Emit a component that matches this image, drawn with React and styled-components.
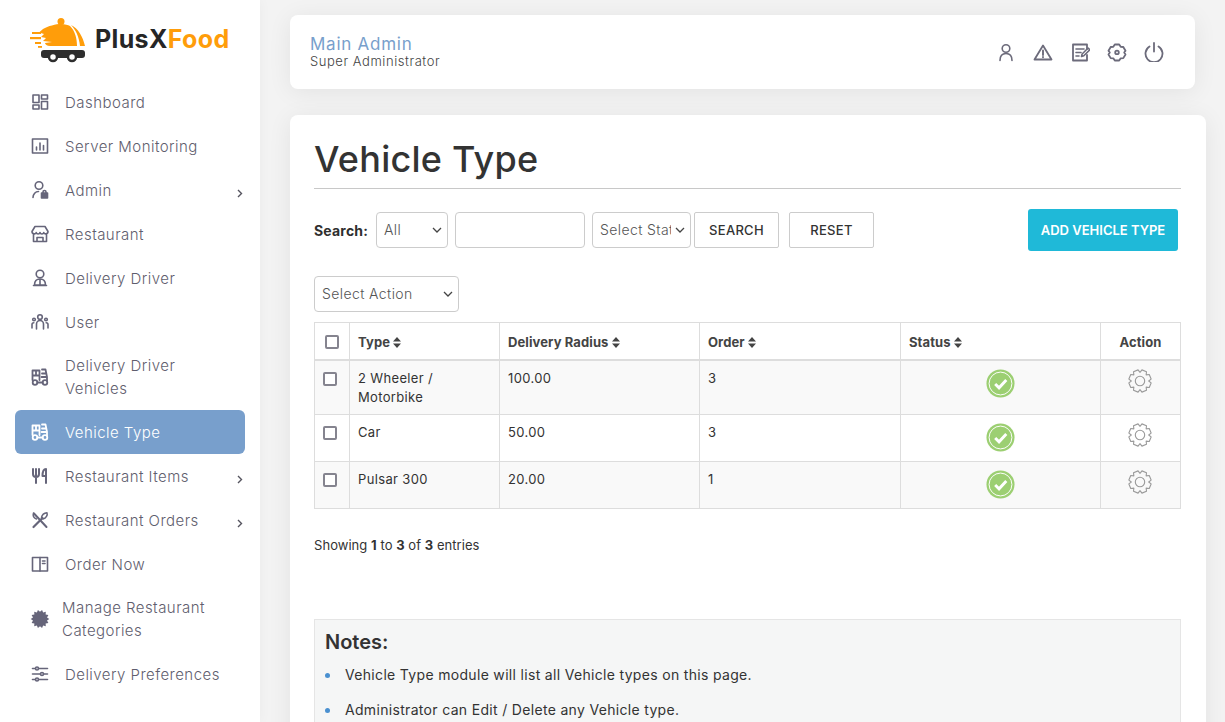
import React from 'react';
import styled, { createGlobalStyle } from 'styled-components';

const GlobalStyle = createGlobalStyle`
  html, body {
    margin: 0;
    height: 722px;
    overflow: hidden;
    background: #f3f3f3;
    font-family: Inter, "Noto Sans", "Liberation Sans", sans-serif;
  }
  * { box-sizing: border-box; }
`;

const Page = styled.div`
  display: flex;
  width: 1225px;
  height: 722px;
  overflow: hidden;
`;

const Sidebar = styled.aside`
  width: 260px;
  flex-shrink: 0;
  background: #fff;
  box-shadow: 0 0 12px rgba(0, 0, 0, 0.04);
`;

const LogoRow = styled.div`
  height: 80px;
  display: flex;
  align-items: flex-start;
  padding: 17px 0 0 30px;
`;

const LogoText = styled.div`
  margin: 7px 0 0 9px;
  font-size: 25px;
  line-height: 31px;
  font-weight: 700;
  letter-spacing: 0.35px;
  color: #262626;
  span { color: #ff9d0a; }
`;

const Nav = styled.nav`
  padding: 0 15px;
`;

const NavItem = styled.div`
  display: flex;
  align-items: center;
  min-height: 44px;
  padding: 10px 2px 10px 15px;
  border-radius: 6px;
  font-size: 15px;
  line-height: 23px;
  font-weight: 300;
  letter-spacing: 0.46px;
  color: ${p => (p.$active ? '#fff' : '#5f5e6e')};
  background: ${p => (p.$active ? '#789fcc' : 'transparent')};
`;

const NavIcon = styled.span`
  display: flex;
  width: 20px;
  height: 20px;
  flex-shrink: 0;
  margin-right: ${p => (p.$tight ? '12px' : '15px')};
  color: ${p => (p.$active ? '#fff' : '#66657a')};
`;

const NavLabel = styled.span`
  max-width: 158px;
`;

const Caret = styled.svg`
  margin: 6px 0 0 auto;
  flex-shrink: 0;
`;

const Main = styled.main`
  flex: 1;
  padding: 15px 20px 0 30px;
`;

const TopBar = styled.header`
  display: flex;
  align-items: center;
  justify-content: space-between;
  width: 905px;
  height: 74px;
  padding: 0 31px 0 20px;
  background: #fff;
  border-radius: 8px;
  box-shadow: 0 3px 24px rgba(0, 0, 0, 0.07);
`;

const AdminBlock = styled.div`
  padding-bottom: 1px;
`;

const AdminName = styled.div`
  font-size: 17px;
  line-height: 20px;
  letter-spacing: 0.75px;
  color: #789fcc;
`;

const AdminRole = styled.div`
  font-size: 13px;
  line-height: 15px;
  font-weight: 300;
  letter-spacing: 0.55px;
  color: #444;
`;

const TopIcons = styled.div`
  display: flex;
  gap: 17px;
  color: #6c6b7b;
`;

const Card = styled.section`
  margin-top: 26px;
  height: 640px;
  padding: 20px 25px 0 24px;
  background: #fff;
  border-radius: 8px;
  box-shadow: 0 3px 24px rgba(0, 0, 0, 0.07);
`;

const Title = styled.h1`
  margin: 0;
  height: 54px;
  border-bottom: 1px solid #c8c8c8;
  font-size: 36px;
  line-height: 48px;
  font-weight: 500;
  letter-spacing: 0.25px;
  color: #333;
`;

const Toolbar = styled.div`
  display: flex;
  align-items: center;
  height: 42px;
  margin-top: 20px;
  padding-right: 3px;
`;

const SearchLabel = styled.label`
  width: 62px;
  font-size: 14px;
  font-weight: 700;
  letter-spacing: 0.2px;
  color: #2f2f2f;
`;

const Select = styled.select`
  appearance: none;
  width: ${p => p.$w}px;
  height: 36px;
  margin-right: ${p => p.$mr || 0}px;
  padding: 0 19px 2px 7px;
  background: #fff url("data:image/svg+xml,%3Csvg xmlns='http://www.w3.org/2000/svg' width='10' height='6' fill='none' stroke='%23444' stroke-width='1.3'%3E%3Cpath d='M1 1l4 4 4-4'/%3E%3C/svg%3E") no-repeat right 5px center;
  border: 1px solid #ccc;
  border-radius: 4px;
  font: 300 14px Inter, sans-serif;
  letter-spacing: 0.4px;
  color: #555;
`;

const SearchInput = styled.input`
  width: 130px;
  height: 36px;
  margin-right: 7px;
  border: 1px solid #ccc;
  border-radius: 4px;
`;

const OutlineButton = styled.button`
  width: 85px;
  height: 36px;
  margin-left: ${p => p.$ml || 0}px;
  background: #fff;
  border: 1px solid #ccc;
  border-radius: 2px;
  font: 500 13px Inter, sans-serif;
  letter-spacing: 0.3px;
  color: #333;
`;

const AddButton = styled.button`
  width: 150px;
  height: 42px;
  margin-left: auto;
  background: #1fb9d8;
  border: none;
  border-radius: 3px;
  font: 600 13px Inter, sans-serif;
  color: #fff;
`;

const ActionRow = styled.div`
  margin-top: 25px;
  height: 46px;
`;

const Table = styled.table`
  width: 866px;
  table-layout: fixed;
  border-collapse: collapse;
  font-size: 13px;
  color: #333;
`;

const Th = styled.th`
  height: 37px;
  padding: 2px 8px 0;
  border: 1px solid #ddd;
  border-bottom: 2px solid #ddd;
  text-align: ${p => (p.$center ? 'center' : 'left')};
  font-weight: 700;
  letter-spacing: 0.1px;
  color: #444;
`;

const Row = styled.tr`
  background: ${p => (p.$odd ? '#f9f9f9' : '#fff')};
`;

const Td = styled.td`
  height: ${p => p.$h}px;
  padding: 8px 8px 7px;
  vertical-align: top;
  border: 1px solid #ddd;
  font-weight: 400;
  line-height: 19px;
  letter-spacing: 0.35px;
  text-align: ${p => (p.$center ? 'center' : 'left')};
`;

const Check = styled.input.attrs({ type: 'checkbox' })`
  appearance: none;
  display: block;
  width: 14px;
  height: 14px;
  margin: ${p => p.$m};
  background: #fff;
  border: 2px solid #85848f;
  border-radius: 2px;
`;

const SortIcon = styled.svg`
  margin-left: 3px;
  vertical-align: -1px;
`;

const StatusSvg = styled.svg`
  display: block;
  margin: 0 auto;
`;

const GearSvg = styled.svg`
  display: block;
  margin: 0 auto;
  transform: translateX(-1px);
`;

const Info = styled.div`
  margin-top: 27px;
  font-size: 13px;
  line-height: 18px;
  font-weight: 400;
  letter-spacing: 0.05px;
  color: #333;
`;

const Notes = styled.div`
  margin-top: 65px;
  height: 120px;
  padding: 8px 10px;
  background: #f5f6f6;
  border: 1px solid #e5e5e5;
`;

const NotesTitle = styled.h4`
  margin: 0;
  font-size: 20px;
  line-height: 28px;
  font-weight: 600;
  color: #333;
`;

const NotesList = styled.ul`
  margin: 7px 0 0;
  padding: 0 0 0 20px;
  list-style: none;
`;

const NotesItem = styled.li`
  position: relative;
  height: 35px;
  font-size: 14px;
  line-height: 24px;
  letter-spacing: 0.32px;
  color: #333;
  &::before {
    content: '';
    position: absolute;
    left: -20px;
    top: 10px;
    width: 5px;
    height: 5px;
    border-radius: 50%;
    background: #4a90d0;
  }
`;

const Icon = ({ children, size = 20 }) => (
  <svg width={size} height={size} viewBox="0 0 20 20" fill="none" stroke="currentColor" strokeWidth="1.6" strokeLinecap="round" strokeLinejoin="round">
    {children}
  </svg>
);

const DashboardIcon = () => (
  <Icon>
    <rect x="3" y="3" width="6" height="7.5" />
    <rect x="11.5" y="3" width="6" height="4" />
    <rect x="3" y="13" width="6" height="4" />
    <rect x="11.5" y="9.5" width="6" height="7.5" />
  </Icon>
);

const ServerIcon = () => (
  <Icon>
    <rect x="2.5" y="3" width="15" height="14" />
    <path d="M6.5 14v-3M10 14V7M13.5 14V9.5" />
  </Icon>
);

const AdminIcon = () => (
  <Icon>
    <circle cx="9" cy="5.5" r="3.8" />
    <path d="M3 17.5c0-3.5 2.5-6 5.5-6" />
    <rect x="11.5" y="13" width="6" height="5" fill="currentColor" />
    <path d="M13 13v-1a1.5 1.5 0 0 1 3 0v1" />
  </Icon>
);

const RestaurantIcon = () => (
  <Icon>
    <path d="M5 2.5h10l3 5c0 3-4 3-4.200 1-.5 2-3.300 2-3.800 0-.5 2-3.300 2-3.800 0C6 10.500 2 10.500 2 7.500z" />
    <path d="M3.500 10.500V17.500h13V10.500M7 17.500v-4h6v4" />
  </Icon>
);

const DriverIcon = () => (
  <Icon>
    <circle cx="10" cy="6" r="3.800" />
    <path d="M4.500 17c0-4 2.500-6 5.500-6s5.500 2 5.500 6zM3.500 17.500h13M10 11v6" />
  </Icon>
);

const UserIcon = () => (
  <Icon>
    <circle cx="10" cy="5" r="2.300" />
    <circle cx="4" cy="7.500" r="1.300" />
    <circle cx="16" cy="7.500" r="1.300" />
    <path d="M6.500 17v-5a3.500 3.500 0 0 1 7 0v5M2 16v-3.500c0-1 .8-1.800 1.800-1.800M18 16v-3.500c0-1-.8-1.800-1.800-1.800" />
  </Icon>
);

const VehicleIcon = () => (
  <Icon>
    <path d="M2.500 13V3.500h7V13M2.500 8.500h7M6 3.500v5" strokeWidth="1.800" />
    <path d="M12 2.500h3.500l1.500 7.500v3.500M12 6.500h3.500M11.500 10H17" strokeWidth="1.800" />
    <circle cx="5" cy="15.500" r="2.300" strokeWidth="1.800" />
    <circle cx="15" cy="15.500" r="2.300" strokeWidth="1.800" />
    <path d="M7.500 15.500h5" strokeWidth="1.800" />
  </Icon>
);

const ForkIcon = () => (
  <Icon>
    <path d="M3 3v5c0 2 1 3 3 3s3-1 3-3V3M6 3v14" strokeWidth="2" />
    <path d="M16 17V3c-2.500 0-3.500 3-3.500 7h3.500" strokeWidth="2" />
  </Icon>
);

const CrossedIcon = () => (
  <Icon>
    <path d="M3.500 17 12.500 8" strokeWidth="2.200" />
    <path d="M17 2.800c.8 2.200-.8 5.500-4 6.200L11.500 7.500C12 5 14.500 3 17 2.800z" strokeWidth="1.500" />
    <path d="M4 3.500 16.500 17" strokeWidth="2" />
    <path d="M3.500 3c-.8 2.500.5 5 3 6" strokeWidth="1.500" />
  </Icon>
);

const BookIcon = () => (
  <Icon>
    <rect x="2.500" y="3.500" width="15" height="13.500" />
    <path d="M10 3.500V17M12.500 7h2.500M12.500 9.500h2.500" />
  </Icon>
);

const badgePoints = () => {
  const pts = [];
  for (let i = 0; i < 28; i++) {
    const r = i % 2 ? 7.200 : 9.300;
    const a = (i * Math.PI) / 14;
    pts.push(`${(10 + r * Math.cos(a)).toFixed(2)},${(10 + r * Math.sin(a)).toFixed(2)}`);
  }
  return pts.join(' ');
};

const BadgeIcon = () => (
  <Icon>
    <polygon points={badgePoints()} fill="currentColor" stroke="none" />
  </Icon>
);

const SlidersIcon = () => (
  <Icon>
    <path d="M2.500 4.500h3M8.500 4.500h9M2.500 10h8M13.500 10h4M2.500 15.500h3M8.500 15.500h9" />
    <circle cx="7" cy="4.500" r="1.500" />
    <circle cx="12" cy="10" r="1.500" />
    <circle cx="7" cy="15.500" r="1.500" />
  </Icon>
);

const PersonIcon = () => (
  <Icon>
    <circle cx="10" cy="6.500" r="3.800" />
    <path d="M4 18.500c0-4.500 2.500-7 6-7s6 2.500 6 7" />
  </Icon>
);

const WarningIcon = () => (
  <Icon>
    <path d="M10 3.500 18.500 17.500h-17z" strokeWidth="1.800" />
    <path d="M10 8.500v4.500M10 15v.3" strokeWidth="1.900" />
  </Icon>
);

const NotesIcon = () => (
  <Icon>
    <path d="M17 7V2.500H3v16h14V13" strokeWidth="1.800" />
    <path d="M6 7h8M6 10.500h5M6 14h3" />
    <path d="m11.500 14.500.6-2.500 6-6 1.700 1.700-6 6z" />
  </Icon>
);

const HexGearIcon = () => (
  <Icon>
    <path d="M7.800 2.500h4.400l1.500 2.300 2.600.2 2.200 3.700-1.300 1.900 1.300 1.900-2.200 3.600-2.600.2-1.500 2.200H7.800l-1.500-2.200-2.600-.2-2.200-3.600 1.300-1.900-1.300-1.900L3.700 5l2.600-.2z" strokeWidth="1.800" />
    <circle cx="10" cy="10.400" r="1.800" strokeWidth="1.800" />
  </Icon>
);

const PowerIcon = () => (
  <Icon>
    <path d="M5.500 4.500a8.500 8.500 0 1 0 9 0M10 1v8.500" strokeWidth="1.800" />
  </Icon>
);

const LogoMark = () => (
  <svg width="56" height="46" viewBox="0 0 56 46">
    <circle cx="31" cy="4.500" r="3.500" fill="#ff9d0a" />
    <path d="M13 12 C18 9 26 7 31 7 C35 7 38 8 40 9 C45 14 47 21 47 29 L20 29 C17 29 15 27.500 15 26 L22 25 L13 24 L16 21 L11 20 L14 17 L9 15.500z" fill="#ff9d0a" />
    <path d="M41 8 C48 11 53 20 55 29 L50 29 C49 20 46 13 41 8z" fill="#ff9d0a" />
    <rect x="2" y="15" width="9" height="2" fill="#ff9d0a" />
    <rect x="0" y="20" width="11" height="2.200" fill="#ff9d0a" />
    <rect x="5" y="25" width="6" height="2" fill="#ff9d0a" />
    <rect x="8" y="29" width="4" height="1.800" fill="#ff9d0a" />
    <rect x="11" y="33" width="44" height="8" rx="3" fill="#2e2e2e" />
    <circle cx="23" cy="40" r="4" fill="#fff" stroke="#2e2e2e" strokeWidth="2.500" />
    <circle cx="42" cy="40" r="4" fill="#fff" stroke="#2e2e2e" strokeWidth="2.500" />
  </svg>
);

const gearPath = () => {
  const pts = [];
  for (let i = 0; i < 8; i++) {
    const c = (i * Math.PI) / 4 + Math.PI / 8;
    [[-0.39, 8.700], [-0.22, 11.300], [0.22, 11.300], [0.39, 8.700]].forEach(([o, r]) => {
      pts.push(`${(12 + r * Math.cos(c + o)).toFixed(2)} ${(12 + r * Math.sin(c + o)).toFixed(2)}`);
    });
  }
  return `M${pts.join('L')}z`;
};

const Gear = () => (
  <GearSvg width="24" height="24" viewBox="0 0 24 24" fill="none" stroke="#9a9a9a" strokeWidth="1.100" strokeLinejoin="round">
    <path d={gearPath()} />
    <circle cx="12" cy="12" r="4.700" />
  </GearSvg>
);

const StatusCheck = () => (
  <StatusSvg width="29" height="29" viewBox="0 0 30 30">
    <circle cx="15" cy="15" r="14.500" fill="#9ccf72" />
    <circle cx="15" cy="15" r="11.800" fill="#9ccf72" stroke="#fff" strokeWidth="1" />
    <path d="M9.500 15.500 13.500 19.500 21 11.500" fill="none" stroke="#fff" strokeWidth="3" />
  </StatusSvg>
);

const Sort = () => (
  <SortIcon width="8" height="11" viewBox="0 0 8 11" fill="#444">
    <path d="M4 0 8 4.500H0zM4 11 0 6.500h8z" />
  </SortIcon>
);

const menu = [
  { label: 'Dashboard', icon: DashboardIcon },
  { label: 'Server Monitoring', icon: ServerIcon },
  { label: 'Admin', icon: AdminIcon, sub: true },
  { label: 'Restaurant', icon: RestaurantIcon },
  { label: 'Delivery Driver', icon: DriverIcon },
  { label: 'User', icon: UserIcon },
  { label: 'Delivery Driver Vehicles', icon: VehicleIcon },
  { label: 'Vehicle Type', icon: VehicleIcon, active: true },
  { label: 'Restaurant Items', icon: ForkIcon, sub: true },
  { label: 'Restaurant Orders', icon: CrossedIcon, sub: true },
  { label: 'Order Now', icon: BookIcon },
  { label: 'Manage Restaurant Categories', icon: BadgeIcon, tight: true },
  { label: 'Delivery Preferences', icon: SlidersIcon },
];

const rows = [
  { type: '2 Wheeler / Motorbike', radius: '100.00', order: 3, h: 54 },
  { type: 'Car', radius: '50.00', order: 3, h: 47 },
  { type: 'Pulsar 300', radius: '20.00', order: 1, h: 47 },
];

export default function App() {
  return (
    <Page>
      <GlobalStyle />
      <Sidebar>
        <LogoRow>
          <LogoMark />
          <LogoText>PlusX<span>Food</span></LogoText>
        </LogoRow>
        <Nav>
          {menu.map(item => (
            <NavItem key={item.label} $active={item.active}>
              <NavIcon $tight={item.tight} $active={item.active}><item.icon /></NavIcon>
              <NavLabel>{item.label}</NavLabel>
              {item.sub && (
                <Caret width="6" height="9" viewBox="0 0 6 9" fill="none" stroke="#55545f" strokeWidth="1.400">
                  <path d="M1 1l3.500 3.500L1 8" />
                </Caret>
              )}
            </NavItem>
          ))}
        </Nav>
      </Sidebar>
      <Main>
        <TopBar>
          <AdminBlock>
            <AdminName>Main Admin</AdminName>
            <AdminRole>Super Administrator</AdminRole>
          </AdminBlock>
          <TopIcons>
            <PersonIcon />
            <WarningIcon />
            <NotesIcon />
            <HexGearIcon />
            <PowerIcon />
          </TopIcons>
        </TopBar>
        <Card>
          <Title>Vehicle Type</Title>
          <Toolbar>
            <SearchLabel>Search:</SearchLabel>
            <Select $w={72} $mr={7} defaultValue="All"><option>All</option></Select>
            <SearchInput />
            <Select $w={99} $mr={3} defaultValue="Select Status"><option>Select Status</option></Select>
            <OutlineButton>SEARCH</OutlineButton>
            <OutlineButton $ml={10}>RESET</OutlineButton>
            <AddButton>ADD VEHICLE TYPE</AddButton>
          </Toolbar>
          <ActionRow>
            <Select $w={145} defaultValue="Select Action"><option>Select Action</option></Select>
          </ActionRow>
          <Table>
            <colgroup>
              <col width="35" />
              <col width="150" />
              <col width="200" />
              <col width="201" />
              <col width="200" />
              <col width="80" />
            </colgroup>
            <thead>
              <tr>
                <Th><Check $m="0 0 0 2px" /></Th>
                <Th>Type<Sort /></Th>
                <Th>Delivery Radius<Sort /></Th>
                <Th>Order<Sort /></Th>
                <Th>Status<Sort /></Th>
                <Th $center>Action</Th>
              </tr>
            </thead>
            <tbody>
              {rows.map((row, i) => (
                <Row key={row.type} $odd={i % 2 === 0}>
                  <Td $h={row.h}><Check $m="3px 0 0" /></Td>
                  <Td $h={row.h}>{row.type}</Td>
                  <Td $h={row.h}>{row.radius}</Td>
                  <Td $h={row.h}>{row.order}</Td>
                  <Td $h={row.h} $center><StatusCheck /></Td>
                  <Td $h={row.h} $center><Gear /></Td>
                </Row>
              ))}
            </tbody>
          </Table>
          <Info>Showing <b>1</b> to <b>3</b> of <b>3</b> entries</Info>
          <Notes>
            <NotesTitle>Notes:</NotesTitle>
            <NotesList>
              <NotesItem>Vehicle Type module will list all Vehicle types on this page.</NotesItem>
              <NotesItem>Administrator can Edit / Delete any Vehicle type.</NotesItem>
            </NotesList>
          </Notes>
        </Card>
      </Main>
    </Page>
  );
}
